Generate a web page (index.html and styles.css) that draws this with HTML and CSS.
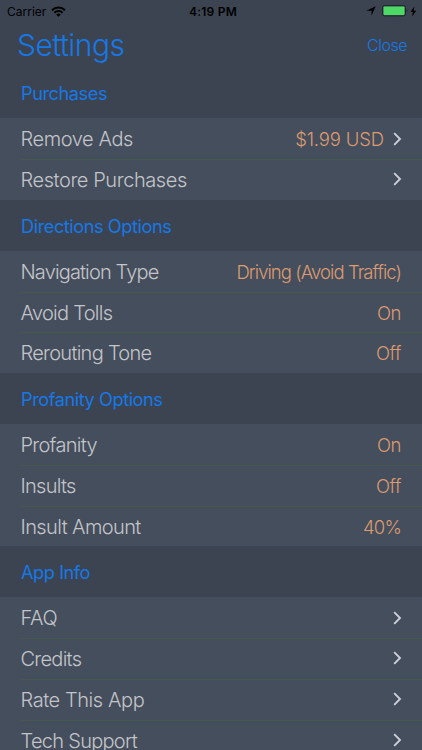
FILE: index.html
```
<!DOCTYPE html>
<html lang="en">
<head>
<meta charset="utf-8">
<meta name="viewport" content="width=device-width, initial-scale=1">
<title>Settings</title>
<link rel="stylesheet" href="styles.css">
</head>
<body>
<svg class="symbols" aria-hidden="true"><symbol id="chevron" viewBox="0 0 9 14"><path d="M1.200 1.200 7 7l-5.800 5.800" fill="none" stroke="currentColor" stroke-width="1.900"/></symbol></svg>
<div class="status">
  <div class="carrier"><span>Carrier</span>
    <svg width="15" height="11" viewBox="0 0 15 11" fill="none" stroke="#000" stroke-width="2"><path d="M1 4.200C4.700.500 10.300.500 14 4.200M3.400 6.800c2.300-2.300 5.900-2.300 8.200 0"/><path d="M7.500 10.700 5.200 8.500c1.300-1.200 3.300-1.200 4.600 0z" fill="#000" stroke="none"/></svg>
  </div>
  <div class="clock">4:19 PM</div>
  <div class="indicators">
    <svg width="10" height="10" viewBox="0 0 10 10"><path d="M9.700.300 5.500 9.700V4.800H.300z"/></svg>
    <svg class="battery" width="26" height="12" viewBox="0 0 26 12"><rect x=".500" y=".500" width="23" height="10.500" rx="2" fill="none" stroke="#20282d"/><rect x="1.500" y="1.500" width="21" height="8.500" rx="1" fill="#4cd964"/><path d="M24.700 4c1.100.6 1.100 3 0 3.600z" fill="#20282d"/></svg>
    <svg class="bolt" width="7" height="11" viewBox="0 0 7 11"><path d="M4.300.500.500 6h2.300l-.7 4.500L6.300 4.700H3.700z"/></svg>
  </div>
</div>
<header class="titlebar"><h1>Settings</h1><a class="close">Close</a></header>
<main>
  <h2 class="first">Purchases</h2>
  <section>
    <div class="row"><span class="label wide">Remove Ads</span><span class="value price">$1.99 USD</span><svg class="chevron"><use href="#chevron"/></svg></div>
    <div class="row"><span class="label wide">Restore Purchases</span><svg class="chevron"><use href="#chevron"/></svg></div>
  </section>
  <h2>Directions Options</h2>
  <section>
    <div class="row"><span class="label tight">Navigation Type</span><span class="value long">Driving (Avoid Traffic)</span></div>
    <div class="row"><span class="label snug">Avoid Tolls</span><span class="value">On</span></div>
    <div class="row"><span class="label snug">Rerouting Tone</span><span class="value">Off</span></div>
  </section>
  <h2>Profanity Options</h2>
  <section>
    <div class="row"><span class="label snug">Profanity</span><span class="value">On</span></div>
    <div class="row"><span class="label snug">Insults</span><span class="value">Off</span></div>
    <div class="row"><span class="label">Insult Amount</span><span class="value percent">40%</span></div>
  </section>
  <h2>App Info</h2>
  <section>
    <div class="row"><span class="label wide">FAQ</span><svg class="chevron"><use href="#chevron"/></svg></div>
    <div class="row"><span class="label snug">Credits</span><svg class="chevron"><use href="#chevron"/></svg></div>
    <div class="row"><span class="label wide">Rate This App</span><svg class="chevron"><use href="#chevron"/></svg></div>
    <div class="row"><span class="label snug">Tech Support</span><svg class="chevron"><use href="#chevron"/></svg></div>
  </section>
</main>
</body>
</html>
```
FILE: styles.css
```
* { box-sizing: border-box; }
body {
  margin: 0;
  height: 750px;
  overflow: hidden;
  background: #3c4452;
  font-family: Inter, "Liberation Sans", sans-serif;
  font-weight: 300;
}
.symbols { display: none; }
.status {
  display: grid;
  grid-template-columns: 1fr auto 1fr;
  align-items: center;
  height: 22px;
  padding: 0 5px 0 7px;
  color: #000;
  font-size: 12px;
  font-weight: 400;
}
.carrier, .indicators { display: flex; align-items: center; }
.carrier { gap: 5px; }
.clock { font-weight: 600; padding-left: 2px; letter-spacing: 0.25px; }
.indicators { justify-content: flex-end; }
.battery { margin-left: 6px; }
.bolt { margin-left: 2px; }
.titlebar {
  display: flex;
  justify-content: space-between;
  align-items: center;
  height: 46px;
  padding: 0 15px 0 17px;
  color: #1678e6;
}
h1 { margin: 0; font-size: 30px; font-weight: 300; letter-spacing: -0.55px; }
.close { font-size: 16px; letter-spacing: -0.5px; }
h2 {
  display: flex;
  align-items: center;
  height: 51px;
  margin: 0;
  padding: 1px 0 0 21px;
  color: #1678e6;
  font-size: 18.200px;
  font-weight: 400;
  letter-spacing: -0.45px;
}
h2.first { height: 50.400px; padding-top: 0; }
section { background: #454e5c; }
.row {
  position: relative;
  display: flex;
  align-items: center;
  height: 40.750px;
  padding: 1px 21px 0 20.500px;
  color: #c3c5ca;
  font-size: 20px;
}
.row + .row::before {
  content: "";
  position: absolute;
  top: 0;
  left: 21px;
  right: 0;
  height: 1px;
  background: #47584f;
}
.label { margin-right: auto; letter-spacing: -0.6px; }
.label.wide { letter-spacing: -0.42px; }
.label.snug { letter-spacing: -0.72px; }
.label.tight { letter-spacing: -0.86px; }
.value { color: #dc9b71; font-size: 18.500px; letter-spacing: -0.4px; }
.value.price { margin-right: 9px; letter-spacing: -0.15px; }
.value.long { letter-spacing: -0.94px; }
.value.percent { letter-spacing: -0.8px; }
.chevron { width: 9px; height: 14px; margin: 0 -1px 1.500px 0; color: #cdd0da; }
```
